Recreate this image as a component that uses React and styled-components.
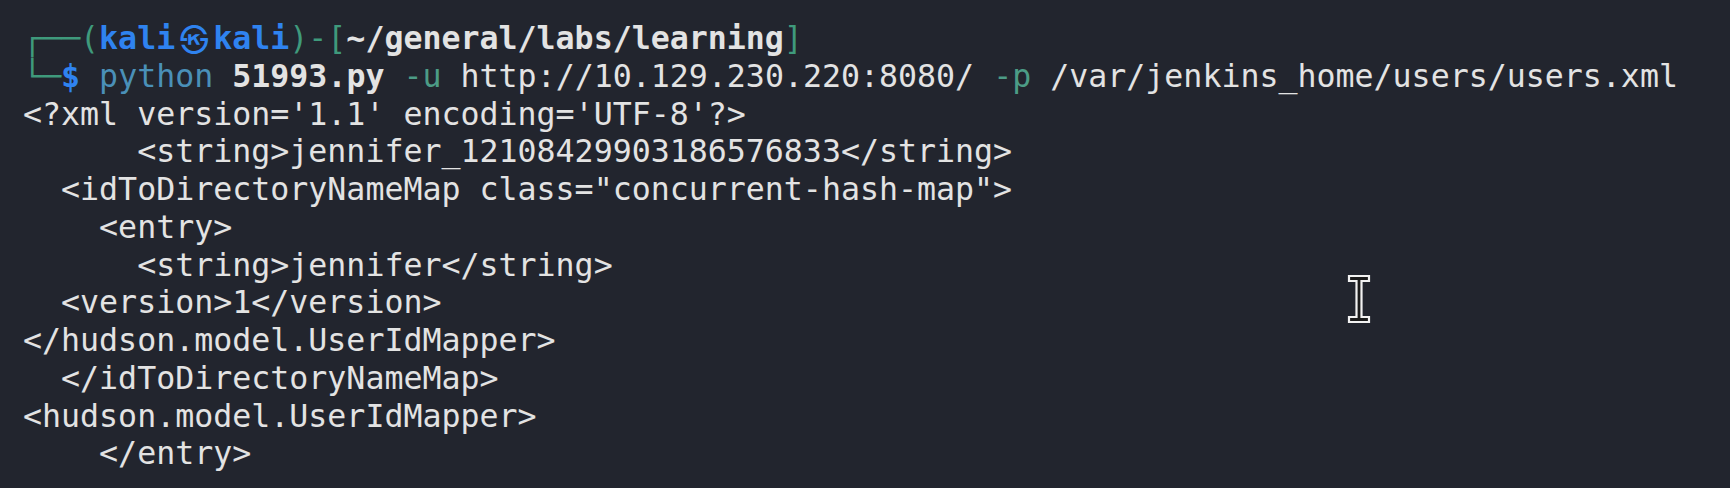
import React from 'react'
import styled, { createGlobalStyle } from 'styled-components'

const GlobalStyle = createGlobalStyle`
  html, body {
    margin: 0;
    padding: 0;
    background: #22252e;
  }
`

const tones = {
  plain: '#e3e3e3',
  frame: '#3f9a7c',
  user: '#2f83f0',
  cmd: '#4a90b8',
  flag: '#4c9c86',
}

const Terminal = styled.main`
  position: relative;
  width: 1730px;
  height: 488px;
  box-sizing: border-box;
  padding: 20px 0 0 23px;
  background: #22252e;
  overflow: hidden;
  font-family: 'DejaVu Sans Mono', 'Liberation Mono', monospace;
  font-size: 31.6px;
  line-height: 37.75px;
  color: ${tones.plain};
`

const Line = styled.div`
  white-space: pre;
  height: 37.75px;
`

const Seg = styled.span`
  color: ${(p) => tones[p.$tone || 'plain']};
  font-weight: ${(p) => (p.$bold ? 'bold' : 'normal')};
`

const Skull = styled.span`
  display: inline-block;
  width: 38px;
  text-align: center;
  color: ${tones.user};
  font-family: 'Noto Sans CJK SC', 'DejaVu Sans', sans-serif;
  font-size: 29px;
  line-height: 37.75px;
  vertical-align: top;
`

const Cursor = styled.svg`
  position: absolute;
  left: 1346px;
  top: 273px;
`

const output = [
  "<?xml version='1.1' encoding='UTF-8'?>",
  '      <string>jennifer_12108429903186576833</string>',
  '  <idToDirectoryNameMap class="concurrent-hash-map">',
  '    <entry>',
  '      <string>jennifer</string>',
  '  <version>1</version>',
  '</hudson.model.UserIdMapper>',
  '  </idToDirectoryNameMap>',
  '<hudson.model.UserIdMapper>',
  '    </entry>',
]

export default function App() {
  return (
    <>
      <GlobalStyle />
      <Terminal>
        <Line>
          <Seg $tone="frame">┌──(</Seg>
          <Seg $tone="user" $bold>kali</Seg>
          <Skull>㉿</Skull>
          <Seg $tone="user" $bold>kali</Seg>
          <Seg $tone="frame">)-[</Seg>
          <Seg $bold>~/general/labs/learning</Seg>
          <Seg $tone="frame">]</Seg>
        </Line>
        <Line>
          <Seg $tone="frame">└─</Seg>
          <Seg $tone="user" $bold>$</Seg>
          <Seg> </Seg>
          <Seg $tone="cmd">python</Seg>
          <Seg> </Seg>
          <Seg $bold>51993.py</Seg>
          <Seg> </Seg>
          <Seg $tone="flag">-u</Seg>
          <Seg> http://10.129.230.220:8080/ </Seg>
          <Seg $tone="flag">-p</Seg>
          <Seg> /var/jenkins_home/users/users.xml</Seg>
        </Line>
        {output.map((text, i) => (
          <Line key={i}>{text}</Line>
        ))}
        <Cursor width="26" height="52" viewBox="0 0 26 52">
          <path
            d="M3 3 H23 V8 H15.5 V44 H23 V49 H3 V44 H10.5 V8 H3 Z"
            fill="#1a1a1a"
            stroke="#f2f2f2"
            strokeWidth="2.2"
            strokeLinejoin="miter"
          />
        </Cursor>
      </Terminal>
    </>
  )
}
